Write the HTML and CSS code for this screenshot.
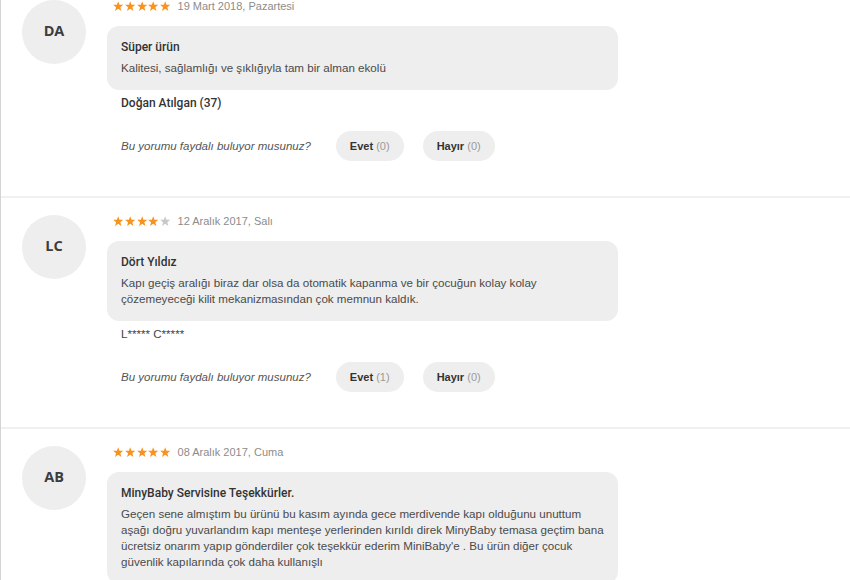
FILE: index.html
```html
<!DOCTYPE html>
<html lang="tr">
<head>
<meta charset="utf-8">
<title>Yorumlar</title>
<link rel="stylesheet" href="styles.css">
</head>
<body>
<svg width="0" height="0" class="defs">
  <defs>
    <polygon id="star" points="5,0.2 6.25,3.55 9.9,3.65 7.05,5.9 8.05,9.6 5,7.45 1.95,9.6 2.95,5.9 0.1,3.65 3.75,3.55"/>
  </defs>
</svg>
<div class="reviews">

  <div class="review first">
    <div class="avatar">DA</div>
    <div class="content">
      <div class="meta">
        <span class="stars">
          <svg class="star on" viewBox="0 0 10 10"><use href="#star"/></svg><svg class="star on" viewBox="0 0 10 10"><use href="#star"/></svg><svg class="star on" viewBox="0 0 10 10"><use href="#star"/></svg><svg class="star on" viewBox="0 0 10 10"><use href="#star"/></svg><svg class="star on" viewBox="0 0 10 10"><use href="#star"/></svg>
        </span>
        <span class="date">19 Mart 2018, Pazartesi</span>
      </div>
      <div class="bubble">
        <div class="title">Süper ürün</div>
        <div class="text">Kalitesi, sağlamlığı ve şıklığıyla tam bir alman ekolü</div>
      </div>
      <div class="author">Doğan Atılgan (37)</div>
      <div class="helpful">
        <span class="question">Bu yorumu faydalı buluyor musunuz?</span>
        <button class="vote"><b>Evet</b> <span class="count">(0)</span></button>
        <button class="vote"><b>Hayır</b> <span class="count">(0)</span></button>
      </div>
    </div>
  </div>

  <div class="review">
    <div class="avatar">LC</div>
    <div class="content">
      <div class="meta">
        <span class="stars">
          <svg class="star on" viewBox="0 0 10 10"><use href="#star"/></svg><svg class="star on" viewBox="0 0 10 10"><use href="#star"/></svg><svg class="star on" viewBox="0 0 10 10"><use href="#star"/></svg><svg class="star on" viewBox="0 0 10 10"><use href="#star"/></svg><svg class="star off" viewBox="0 0 10 10"><use href="#star"/></svg>
        </span>
        <span class="date">12 Aralık 2017, Salı</span>
      </div>
      <div class="bubble">
        <div class="title">Dört Yıldız</div>
        <div class="text">Kapı geçiş aralığı biraz dar olsa da otomatik kapanma ve bir çocuğun kolay kolay<br>çözemeyeceği kilit mekanizmasından çok memnun kaldık.</div>
      </div>
      <div class="author anon">L***** C*****</div>
      <div class="helpful">
        <span class="question">Bu yorumu faydalı buluyor musunuz?</span>
        <button class="vote"><b>Evet</b> <span class="count">(1)</span></button>
        <button class="vote"><b>Hayır</b> <span class="count">(0)</span></button>
      </div>
    </div>
  </div>

  <div class="review">
    <div class="avatar">AB</div>
    <div class="content">
      <div class="meta">
        <span class="stars">
          <svg class="star on" viewBox="0 0 10 10"><use href="#star"/></svg><svg class="star on" viewBox="0 0 10 10"><use href="#star"/></svg><svg class="star on" viewBox="0 0 10 10"><use href="#star"/></svg><svg class="star on" viewBox="0 0 10 10"><use href="#star"/></svg><svg class="star on" viewBox="0 0 10 10"><use href="#star"/></svg>
        </span>
        <span class="date">08 Aralık 2017, Cuma</span>
      </div>
      <div class="bubble">
        <div class="title">MinyBaby Servisine Teşekkürler.</div>
        <div class="text">Geçen sene almıştım bu ürünü bu kasım ayında gece merdivende kapı olduğunu unuttum<br>aşağı doğru yuvarlandım kapı menteşe yerlerinden kırıldı direk MinyBaby temasa geçtim bana<br>ücretsiz onarım yapıp gönderdiler çok teşekkür ederim MiniBaby'e . Bu ürün diğer çocuk<br>güvenlik kapılarında çok daha kullanışlı</div>
      </div>
    </div>
  </div>

</div>
</body>
</html>
```

FILE: styles.css
```css
html, body {
  margin: 0;
  padding: 0;
  background: #fff;
}
body {
  font-family: "Liberation Sans", Arial, sans-serif;
  color: #444;
  height: 580px;
  overflow: hidden;
  border-left: 1px solid #d4d4d4;
}
.defs {
  position: absolute;
}
.reviews {
  display: flex;
  flex-direction: column;
}
.review {
  display: flex;
  gap: 21px;
  padding: 17px 0 35px 21px;
  border-top: 2px solid #f0f0f0;
}
.review.first {
  border-top: none;
  padding-top: 0;
}
.avatar {
  flex: none;
  width: 64px;
  height: 64px;
  border-radius: 50%;
  background: #eeeeee;
  display: flex;
  align-items: center;
  justify-content: center;
  padding-bottom: 3px;
  box-sizing: border-box;
  font-family: "Open Sans", "Liberation Sans", sans-serif;
  font-weight: 700;
  font-size: 14.5px;
  color: #3d3d3d;
}
.content {
  display: flex;
  flex-direction: column;
}
.meta {
  display: flex;
  align-items: center;
  height: 12px;
  padding-left: 6px;
  margin-bottom: 14px;
}
.stars {
  display: flex;
  gap: 1.4px;
}
.star {
  width: 10.4px;
  height: 10.4px;
  display: block;
}
.star.on { fill: #f7931e; }
.star.off { fill: #c8c8c8; }
.date {
  margin-left: 7px;
  font-size: 11px;
  color: #8c8c8c;
}
.bubble {
  width: 511px;
  box-sizing: border-box;
  background: #eeeeee;
  border-radius: 12px;
  padding: 12px 14px 14px;
}
.title {
  font-family: Roboto, "Liberation Sans", sans-serif;
  font-weight: 500;
  font-size: 12px;
  line-height: 18px;
  color: #333;
  margin-bottom: 4px;
}
.text {
  font-size: 11.6px;
  line-height: 16px;
  color: #4a4a4a;
}
.author {
  margin-top: 5px;
  padding-left: 14px;
  font-family: Roboto, "Liberation Sans", sans-serif;
  font-weight: 500;
  font-size: 12px;
  line-height: 16px;
  color: #333;
}
.author.anon {
  font-family: "Liberation Sans", Arial, sans-serif;
  font-weight: 400;
  font-size: 11.6px;
  color: #444;
}
.helpful {
  margin-top: 20px;
  padding-left: 14px;
  display: flex;
  align-items: center;
}
.question {
  font-style: italic;
  font-size: 11.5px;
  color: #555;
  margin-right: 25px;
}
.vote {
  height: 30px;
  padding: 0 14px;
  border: none;
  border-radius: 15px;
  background: #eeeeee;
  font-family: "Liberation Sans", Arial, sans-serif;
  font-size: 11px;
  color: #333;
  margin-right: 19px;
  cursor: pointer;
}
.vote b {
  font-weight: 700;
}
.count {
  color: #9a9a9a;
}
```
